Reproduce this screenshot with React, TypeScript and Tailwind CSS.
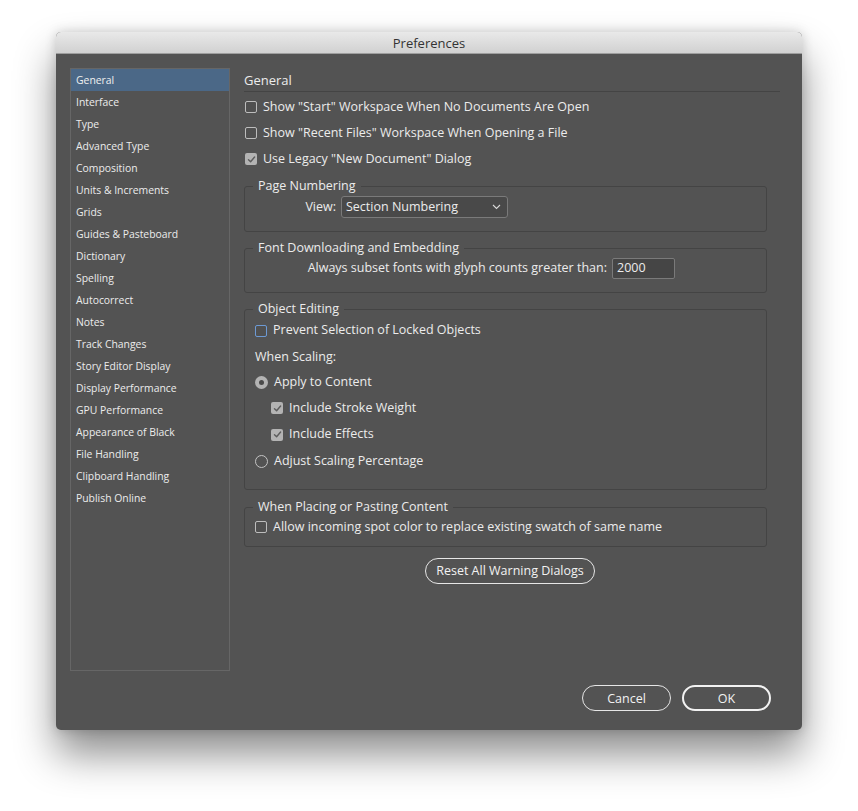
import React from "react";

const FONT = { fontFamily: '"Open Sans", "Noto Sans", "DejaVu Sans", sans-serif' };

const sidebarItems = [
  "General",
  "Interface",
  "Type",
  "Advanced Type",
  "Composition",
  "Units & Increments",
  "Grids",
  "Guides & Pasteboard",
  "Dictionary",
  "Spelling",
  "Autocorrect",
  "Notes",
  "Track Changes",
  "Story Editor Display",
  "Display Performance",
  "GPU Performance",
  "Appearance of Black",
  "File Handling",
  "Clipboard Handling",
  "Publish Online",
];

function CheckBox({ checked = false, focus = false }: { checked?: boolean; focus?: boolean }) {
  if (checked) {
    return (
      <span className="flex h-[12px] w-[12px] shrink-0 items-center justify-center rounded-[2px] bg-[#b3b3b3]">
        <svg width="9" height="9" viewBox="0 0 9 9" fill="none">
          <path d="M1.5 4.8 L3.6 6.8 L7.6 2" stroke="#5c5c5c" strokeWidth="1.4" strokeLinecap="round" strokeLinejoin="round" />
        </svg>
      </span>
    );
  }
  return (
    <span
      className={
        focus
          ? "block h-[12px] w-[12px] shrink-0 rounded-[2px] border border-[#6d9ad4] bg-[#505050]"
          : "block h-[12px] w-[12px] shrink-0 rounded-[2px] border border-[#bdbdbd] bg-[#505050]"
      }
    />
  );
}

function Radio({ checked = false }: { checked?: boolean }) {
  if (checked) {
    return (
      <span className="flex h-[13px] w-[13px] shrink-0 items-center justify-center rounded-full bg-[#b3b3b3]">
        <span className="block h-[5px] w-[5px] rounded-full bg-[#4a4a4a]" />
      </span>
    );
  }
  return <span className="block h-[13px] w-[13px] shrink-0 rounded-full border border-[#c4c4c4]" />;
}

function Group({ title, children, className = "" }: { title: string; children: React.ReactNode; className?: string }) {
  return (
    <fieldset className={"w-[523px] rounded-[3px] border border-[#444444] " + className}>
      <legend className="ml-[8px] px-[5px] text-[12.5px] leading-[14px] text-[#ececec]">{title}</legend>
      {children}
    </fieldset>
  );
}

export default function App() {
  return (
    <div className="h-[811px] w-[858px] bg-white pl-[56px] pt-[32px]" style={FONT}>
      <div className="flex h-[698px] w-[746px] flex-col overflow-hidden rounded-[5px] bg-[#535353] shadow-[0_24px_40px_rgba(0,0,0,0.45),0_0_12px_rgba(0,0,0,0.18)]">
        {/* Title bar */}
        <div className="flex h-[22px] shrink-0 items-center justify-center border-b border-[#9e9e9e] bg-gradient-to-b from-[#e9e9e9] to-[#d1d1d1] pt-[2px] text-[13px] text-[#333333]">
          Preferences
        </div>

        <div className="flex flex-1 flex-col px-[14px] pt-[14px]">
          <div className="flex h-[603px] gap-[14px]">
            {/* Sidebar */}
            <div className="flex h-full w-[160px] shrink-0 flex-col border border-[#666666]">
              {sidebarItems.map((item, i) => (
                <div
                  key={item}
                  className={
                    i === 0
                      ? "flex h-[22px] items-center bg-[#4b6887] pl-[5px] pt-[2px] text-[10.4px] text-[#f0f0f0]"
                      : "flex h-[22px] items-center pl-[5px] pt-[2px] text-[10.4px] text-[#ececec]"
                  }
                >
                  {item}
                </div>
              ))}
            </div>

            {/* Content */}
            <div className="flex flex-1 flex-col text-[12.5px] text-[#ececec]">
              <div className="mr-[8px] mt-[2px] flex h-[22px] items-center border-b border-[#444444] text-[13px]">General</div>
              <div className="mt-[2px] flex flex-col">
                <label className="flex h-[26px] items-center gap-[6px] pl-[1px]">
                  <CheckBox />
                  <span>Show "Start" Workspace When No Documents Are Open</span>
                </label>
                <label className="flex h-[26px] items-center gap-[6px] pl-[1px]">
                  <CheckBox />
                  <span>Show "Recent Files" Workspace When Opening a File</span>
                </label>
                <label className="flex h-[26px] items-center gap-[6px] pl-[1px]">
                  <CheckBox checked />
                  <span>Use Legacy "New Document" Dialog</span>
                </label>
              </div>

              <Group title="Page Numbering" className="mt-[7px] pb-[13px] pt-[3px]">
                <div className="flex items-center">
                  <span className="w-[96px] pr-[5px] text-right">View:</span>
                  <div className="flex h-[22px] w-[167px] items-center justify-between rounded-[3px] border border-[#7a7a7a] bg-[#494949] pl-[4px] pr-[6px]">
                    <span>Section Numbering</span>
                    <svg width="9" height="6" viewBox="0 0 9 6" fill="none">
                      <path d="M1 1 L4.5 4.5 L8 1" stroke="#d8d8d8" strokeWidth="1.1" />
                    </svg>
                  </div>
                </div>
              </Group>

              <Group title="Font Downloading and Embedding" className="mt-[9px] pb-[13px] pt-[3px]">
                <div className="flex items-center">
                  <span className="w-[367px] whitespace-nowrap pr-[5px] text-right">Always subset fonts with glyph counts greater than:</span>
                  <div className="flex h-[21px] w-[63px] items-center rounded-[2px] border border-[#7a7a7a] bg-[#454545] pl-[4px]">2000</div>
                </div>
              </Group>

              <Group title="Object Editing" className="mt-[9px] pb-[15px] pt-[1px]">
                <div className="flex flex-col pl-[10px]">
                  <label className="flex h-[27px] items-center gap-[6px]">
                    <CheckBox focus />
                    <span>Prevent Selection of Locked Objects</span>
                  </label>
                  <div className="flex h-[26px] items-center">When Scaling:</div>
                  <label className="flex h-[25px] items-center gap-[6px]">
                    <Radio checked />
                    <span>Apply to Content</span>
                  </label>
                  <label className="flex h-[26px] items-center gap-[6px] pl-[16px]">
                    <CheckBox checked />
                    <span>Include Stroke Weight</span>
                  </label>
                  <label className="flex h-[27px] items-center gap-[6px] pl-[16px]">
                    <CheckBox checked />
                    <span>Include Effects</span>
                  </label>
                  <label className="flex h-[26px] items-center gap-[6px]">
                    <Radio />
                    <span>Adjust Scaling Percentage</span>
                  </label>
                </div>
              </Group>

              <Group title="When Placing or Pasting Content" className="mt-[10px] pb-[6px]">
                <label className="flex h-[26px] items-center gap-[6px] pl-[10px]">
                  <CheckBox />
                  <span>Allow incoming spot color to replace existing swatch of same name</span>
                </label>
              </Group>

              <div className="mt-[11px] flex w-[532px] justify-center">
                <button className="h-[26px] w-[170px] rounded-full border border-[#e6e6e6] text-[12.5px] text-[#f2f2f2]">
                  Reset All Warning Dialogs
                </button>
              </div>
            </div>
          </div>

          <div className="mt-[14px] flex justify-end gap-[11px] pr-[17px]">
            <button className="h-[26px] w-[89px] rounded-full border border-[#e6e6e6] pt-[2px] text-[12.5px] text-[#f2f2f2]">Cancel</button>
            <button className="h-[26px] w-[89px] rounded-full border-2 border-[#f2f2f2] pt-[2px] text-[12.5px] text-[#f2f2f2]">OK</button>
          </div>
        </div>
      </div>
    </div>
  );
}
